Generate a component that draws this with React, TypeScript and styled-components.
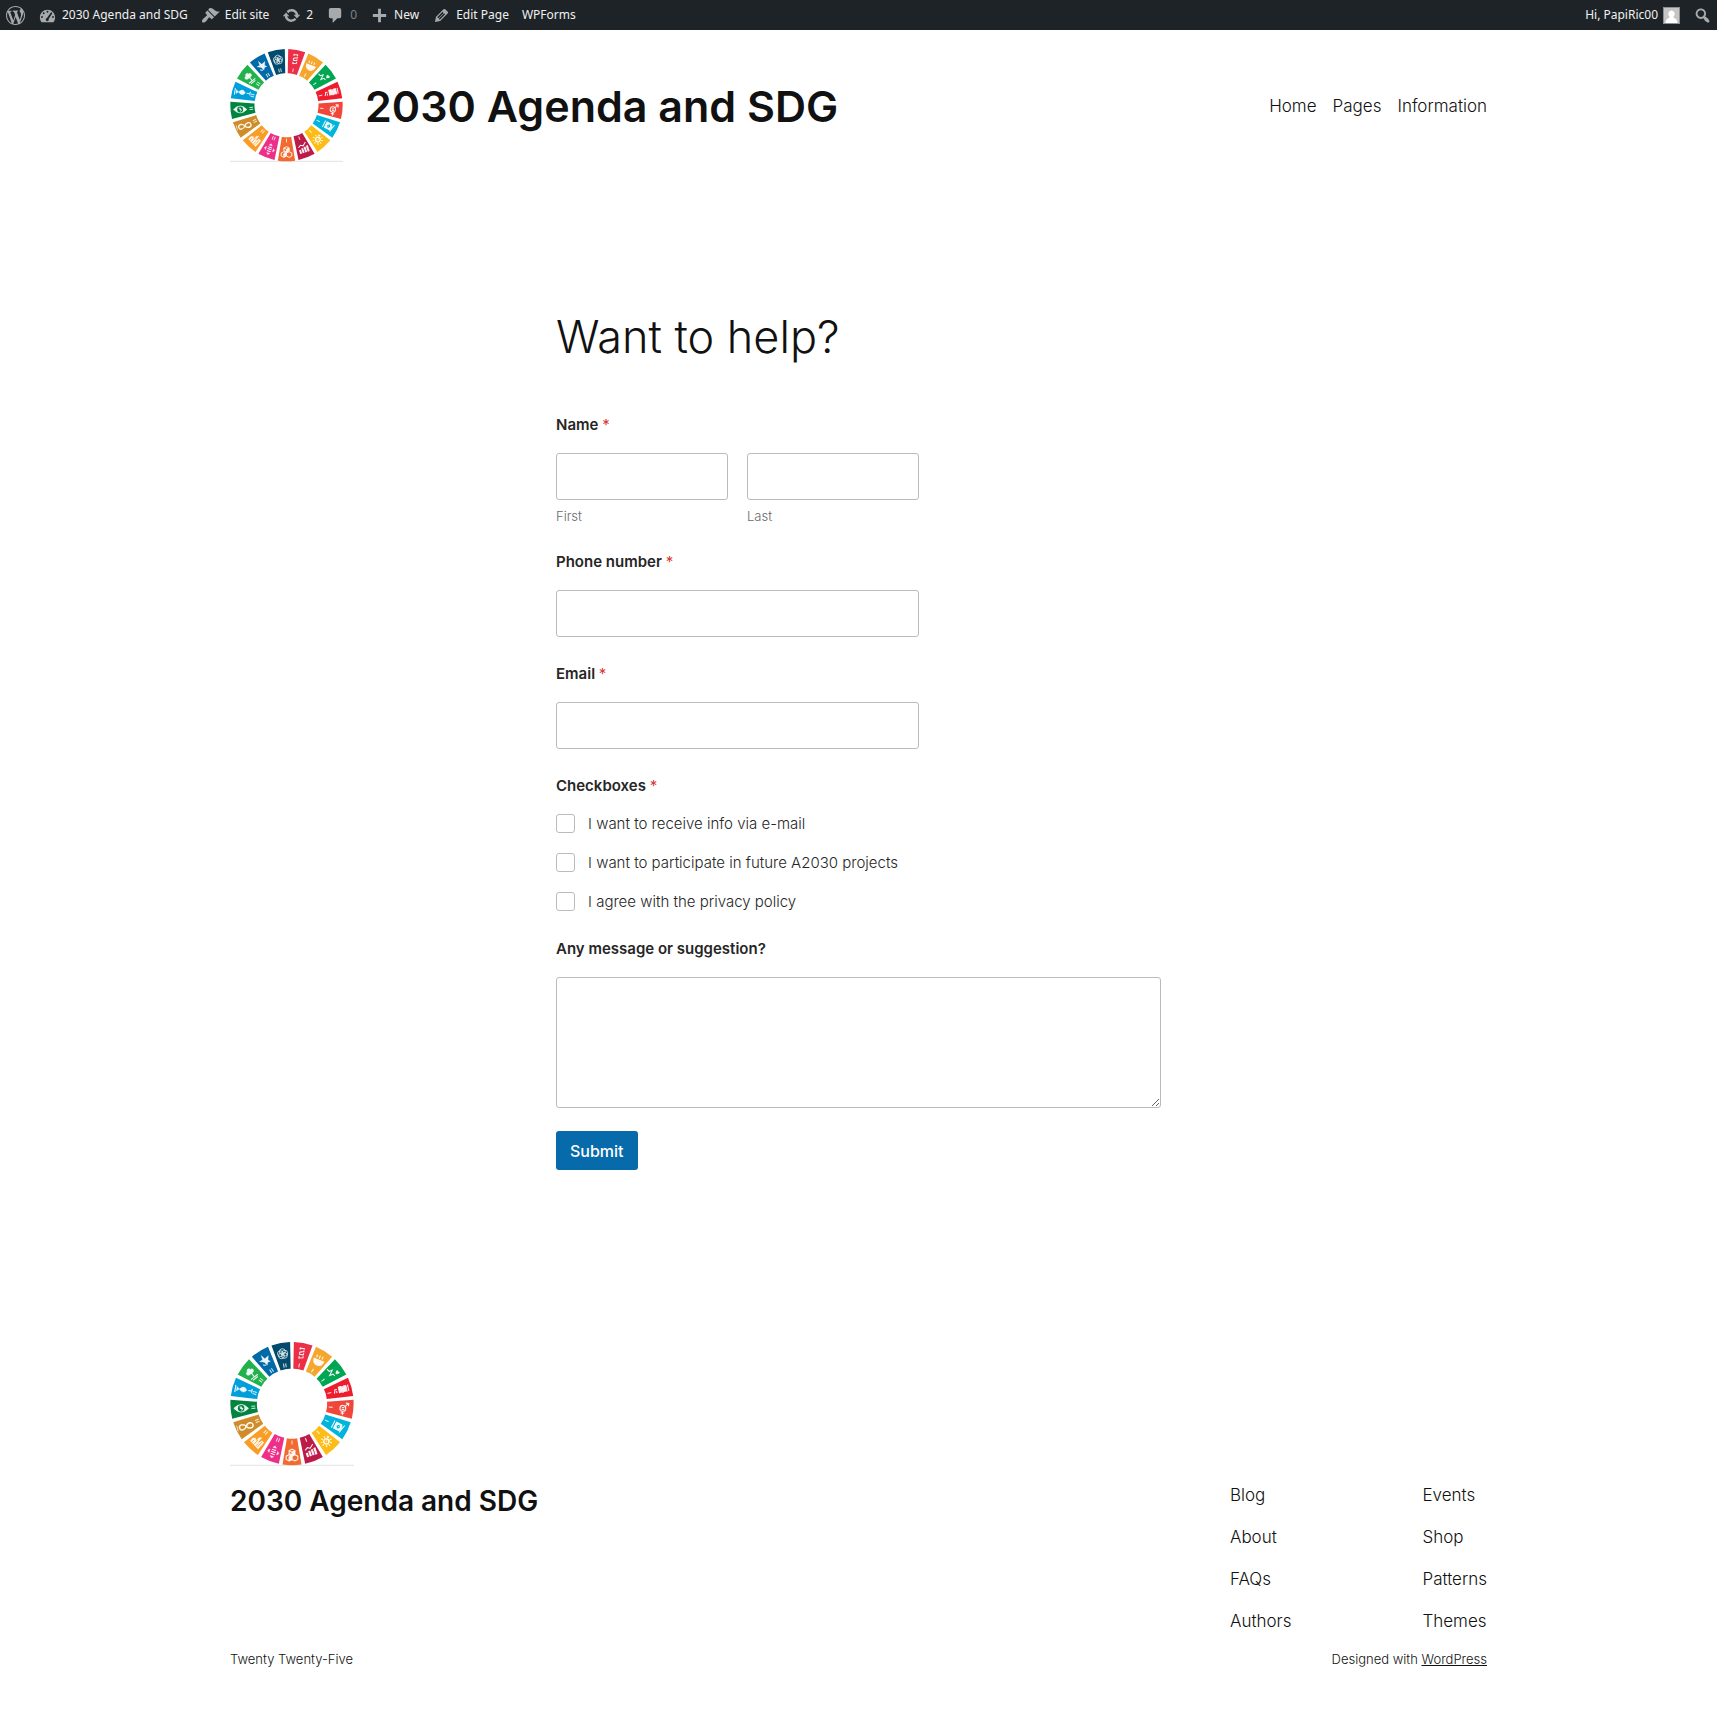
import React from "react";
import styled, { createGlobalStyle } from "styled-components";

const GlobalStyle = createGlobalStyle`
  *, *::before, *::after { box-sizing: border-box; }
  body {
    margin: 0;
    background: #fff;
    color: #111;
    font-family: Inter, "Liberation Sans", sans-serif;
    font-weight: 300;
  }
  a { color: inherit; text-decoration: none; }
  ul { list-style: none; margin: 0; padding: 0; }
`;

/* ---------- Admin bar ---------- */

const AdminBar = styled.nav`
  display: flex;
  justify-content: space-between;
  height: 30px;
  padding: 1px 5px 0 6px;
  background: #1d2327;
  color: #f0f0f1;
  font: 400 12px/28px "Noto Sans", "Open Sans", sans-serif;
`;

const BarGroup = styled.ul`
  display: flex;
  gap: 13px;
`;

const BarLink = styled.a<{ $muted?: boolean }>`
  display: flex;
  align-items: center;
  gap: 5px;
  height: 28px;
  color: ${(p) => (p.$muted ? "#7d8287" : "#f0f0f1")};
  white-space: nowrap;
`;

const BarButton = styled.button`
  display: flex;
  align-items: center;
  height: 28px;
  padding: 0;
  border: 0;
  background: none;
`;

const BarIcon = styled.svg`
  display: block;
  width: 19px;
  height: 19px;
  fill: #a7aaad;
`;

const Avatar = styled.svg`
  display: block;
  width: 17px;
  height: 17px;
  border: 1px solid #8c8f94;
  background: #c5c5c5;
`;

const icons = {
  wordpress:
    "M20 10c0-5.51-4.49-10-10-10C4.48 0 0 4.49 0 10c0 5.52 4.48 10 10 10 5.51 0 10-4.48 10-10zM7.78 15.37L4.37 6.22c.55-.02 1.17-.08 1.17-.08.5-.06.44-1.13-.06-1.11 0 0-1.45.11-2.37.11-.18 0-.37 0-.58-.01C4.12 2.69 6.87 1.11 10 1.11c2.33 0 4.45.87 6.05 2.34-.68-.11-1.65.39-1.65 1.58 0 .74.45 1.36.9 2.1.35.61.55 1.36.55 2.46 0 1.49-1.4 5-1.4 5l-3.03-8.37c.54-.02.82-.17.82-.17.5-.05.44-1.25-.06-1.22 0 0-1.44.12-2.38.12-.87 0-2.33-.12-2.33-.12-.5-.03-.56 1.2-.06 1.22l.92.08 1.26 3.41zM17.41 10c.24-.64.74-1.87.43-4.25.7 1.29 1.05 2.71 1.05 4.25 0 3.29-1.73 6.24-4.4 7.78.97-2.59 1.94-5.2 2.92-7.78zM6.1 18.09C3.12 16.65 1.11 13.53 1.11 10c0-1.3.23-2.48.72-3.59C3.25 10.3 4.67 14.2 6.1 18.09zm4.03-6.63l2.58 6.98c-.86.29-1.76.45-2.71.45-.79 0-1.57-.11-2.29-.33.81-2.38 1.62-4.74 2.42-7.1z",
  dashboard:
    "M3.76 17h12.48c1.1-1.37 1.76-3.11 1.76-5 0-4.42-3.58-8-8-8s-8 3.58-8 8c0 1.89.66 3.63 1.76 5zM10 5a1 1 0 1 1 0 2a1 1 0 1 1 0-2zM6 6.6a1 1 0 1 1 0 2a1 1 0 1 1 0-2zM14 6.6a1 1 0 0 1 .6 1.8l-3.4 5.2a1.6 1.6 0 1 1-1.8-.9l4-5.7a1 1 0 0 1 .6-.4zM4.2 10.6a1 1 0 1 1 0 2a1 1 0 1 1 0-2zM15.8 10.6a1 1 0 1 1 0 2a1 1 0 1 1 0-2z",
  brush:
    "M14.48 11.06L7.41 3.99l1.5-1.5c.5-.56 2.3-.47 3.51.32 1.21.8 1.43 1.28 2.91 2.1 1.18.64 2.45 1.26 4.45.85zm-.71.71L6.7 4.7 4.93 6.47c-.39.39-.39 1.02 0 1.41l1.06 1.06c.39.39.39 1.03 0 1.42-.6.6-1.43 1.11-2.21 1.69-.35.26-.7.53-1.01.84C1.43 14.23.4 16.08 1.4 17.07c.99 1 2.84-.03 4.18-1.36.31-.31.58-.66.85-1.02.57-.78 1.08-1.61 1.69-2.21.39-.39 1.02-.39 1.41 0l1.06 1.06c.39.39 1.02.39 1.41 0z",
  update:
    "M10.2 3.28c3.53 0 6.43 2.61 6.92 6h2.08l-3.5 4-3.5-4h2.32c-.45-1.97-2.21-3.45-4.32-3.45-1.45 0-2.73.71-3.54 1.78L4.95 5.66C6.23 4.2 8.11 3.28 10.2 3.28zm-.4 13.44c-3.52 0-6.43-2.61-6.92-6H.8l3.5-4c1.17 1.33 2.33 2.67 3.5 4H5.48c.45 1.97 2.21 3.45 4.32 3.45 1.45 0 2.73-.71 3.54-1.78l1.71 1.95c-1.28 1.46-3.15 2.38-5.25 2.38z",
  comment:
    "M5 2h9c1.1 0 2 .9 2 2v7c0 1.1-.9 2-2 2h-2l-5 5v-5H5c-1.1 0-2-.9-2-2V4c0-1.1.9-2 2-2z",
  plus: "M17 8.5v3h-5.5V17h-3v-5.5H3v-3h5.5V3h3v5.5z",
  edit: "M13.89 3.39l2.71 2.72c.46.46.42 1.24.03 1.64l-8.01 8.02-5.56 1.16 1.16-5.58s7.6-7.63 7.99-8.03c.39-.39 1.22-.39 1.68.07zm-2.73 2.79l-5.59 5.61 1.11 1.11 5.54-5.65zm-2.97 8.23l5.58-5.6-1.07-1.08-5.59 5.6z",
  search:
    "M12.14 4.18c1.87 1.87 2.11 4.75.72 6.89.12.1.22.21.36.31.2.16.47.36.81.59.34.24.56.39.66.47.42.31.73.57.94.78.32.32.6.65.84 1 .25.35.44.69.59 1.04.14.35.21.68.18 1-.02.32-.14.59-.36.81s-.49.34-.81.36c-.31.02-.65-.04-.99-.19-.35-.14-.7-.34-1.04-.59-.35-.24-.68-.52-1-.84-.21-.21-.47-.52-.77-.93-.1-.13-.25-.35-.47-.66-.22-.32-.4-.57-.56-.78-.16-.2-.29-.35-.44-.5-2.07 1.09-4.69.76-6.44-.98-2.14-2.15-2.14-5.64 0-7.78 2.15-2.15 5.63-2.15 7.78 0zm-1.41 6.36c1.36-1.37 1.36-3.58 0-4.95-1.37-1.37-3.59-1.37-4.95 0-1.37 1.37-1.37 3.58 0 4.95 1.36 1.37 3.58 1.37 4.95 0z",
};

function Icon({ name }: { name: keyof typeof icons }) {
  return (
    <BarIcon viewBox="0 0 20 20" aria-hidden="true">
      <path fillRule="evenodd" d={icons[name]} />
    </BarIcon>
  );
}

/* ---------- Goals wheel ---------- */

const Wheel = styled.svg<{ $size: number }>`
  display: block;
  flex: none;
  width: ${(p) => p.$size}px;
  height: ${(p) => p.$size}px;
`;

const fig = { fill: "none", stroke: "#fff", strokeWidth: 3 };

type Goal = { color: string; turn: number; art: React.ReactNode };

const goals: Goal[] = [
  { color: "#eb2f46", turn: 98, art: <g {...fig}><path d="M-16-6h5m2 0h5m3 0h5m3 0h5M-14-6v11M-6-6l3 10M3-6v12M11-6l2 10M-16 5h6M-4 5h6M8 5h7" /></g> },
  { color: "#f4a72c", turn: 22, art: <g {...fig}><path fill="#fff" d="M-14 0h28q-2 14-14 14T-14 0z" /><path d="M-8-5q-3-4 0-8M0-5q-3-4 0-8M8-5q-3-4 0-8" /></g> },
  { color: "#00a651", turn: 45, art: <g {...fig}><path d="M-18 4h8l4-8 5 15 4-9h7" /><path fill="#fff" d="M8-4q-8-8-3-10 3 0 3 3 0-3 4-3 4 2-4 10z" strokeWidth="1" /></g> },
  { color: "#ee1c2e", turn: -12, art: <g {...fig}><path fill="#fff" d="M-6-8q7-2 10 2 4-4 11-2v15q-7-2-11 1-3-3-10-1z" /><path d="M20-10v18M-20 7l4-12M-16-3h5M-13 7v-6" /></g> },
  { color: "#f1473a", turn: 5, art: <g {...fig}><circle cx="0" cy="0" r="8" /><path d="M0 8v11M-5 13h10M6-6l8-8M7-15h8v8M-3-2h7M-3 3h7" /></g> },
  { color: "#00b4dc", turn: 27, art: <g {...fig}><path d="M-14-11v22M16-11L11 13" /><path fill="#fff" d="M-8-9H8l4 9-4 9H-8z" /><path stroke="#00b4dc" d="M-2 0l4-4 3 4-3 4z" /></g> },
  { color: "#fdbc16", turn: 20, art: <g {...fig}><circle r="7" strokeWidth="4" /><path strokeDasharray="3 5.5" d="M0-13a13 13 0 1 1-.1 0" strokeWidth="5" /><path d="M0-3v5" strokeWidth="2" /></g> },
  { color: "#bc1b48", turn: -18, art: <g {...fig}><path d="M-11 13V1M-3 13V-2M5 13V-4M13 13V-6" strokeWidth="6" /><path d="M-13-7l8-5 7 4 10-9" /></g> },
  { color: "#f26a2e", turn: 0, art: <g {...fig}><path d="M0-15l8 4v8l-8 4-8-4v-8zM-8 0l8 4v9l-8 4-8-4V4zM8 0l8 4v9l-8 4-8-4V4zM-8-11L0-7l8-4" /><path fill="#fff" d="M-8 6l7-3v9l-7 4zM0-6l7-4v7l-7 4z" /></g> },
  { color: "#ee2f89", turn: 18, art: <g {...fig}><path d="M-6-4H6M-6 2H6M-6 8H6" /><path fill="#fff" d="M0-15l5 5H-5zM0 19l5-5H-5zM-16 2l5-5V7zM16 2l-5-5V7z" strokeWidth="1" /></g> },
  { color: "#f99d26", turn: 42, art: <g {...fig}><path fill="#fff" d="M-16 12V2l6-5 6 5v-12l6-5v17l5-6v-5h8v24z" strokeWidth="1" /><path stroke="#f99d26" strokeWidth="2" d="M-10 12V3M-2 12V-4M5 12v-9M10 12V-6" /></g> },
  { color: "#cf8d2a", turn: -14, art: <g {...fig}><path d="M0 0c-6-10-19-9-19 0s13 10 19 0 19-9 19 0-13 10-19 0z" strokeWidth="4" /><path d="M-25-8v16" strokeWidth="2" /></g> },
  { color: "#00843f", turn: 0, art: <g {...fig}><path fill="#fff" d="M-20 0q20-21 40 0-20 21-40 0z" strokeWidth="2" /><circle r="9" fill="#00843f" stroke="none" /><path d="M-4-4l5 1-2 3 5 1-3 5" /></g> },
  { color: "#009fdc", turn: 9, art: <g {...fig}><path fill="#fff" d="M-10 0Q2-15 11 0 2 13-10 0l-7 6v-12z" strokeWidth="1" /><path d="M-21-10v20M15 0h8M25-6v11" /></g> },
  { color: "#21b24b", turn: -38, art: <g {...fig}><path fill="#fff" d="M-3 2q-11 0-10-7 1-4 6-4 1-6 7-5 4 1 4 5 6 0 6 5 0 6-8 6z" strokeWidth="1" /><path d="M0 0v14M-12 14h24M-9 19H8" /></g> },
  { color: "#0069a7", turn: 32, art: <g {...fig}><path fill="#fff" d="M-16-5l13 2 4-12 5 10 8 0-5 5 3 8-11-2-12 5 5-8z" strokeWidth="1" /><path d="M10 10l-8 4" /></g> },
  { color: "#004a6b", turn: -8, art: <g {...fig} strokeWidth="2"><circle cx="0" cy="-5" r="8" /><circle cx="-6" cy="0" r="8" /><circle cx="6" cy="0" r="8" /><circle cx="-4" cy="6" r="8" /><circle cx="4" cy="6" r="8" /></g> },
];

const STEP = 360 / goals.length;

function GoalsWheel({ size }: { size: number }) {
  return (
    <Wheel $size={size} viewBox="0 0 340 340" role="img" aria-label="Sustainable goals wheel">
      <path d="M0 338h340" stroke="#e2e2e2" strokeWidth="3" />
      {goals.map((goal, i) => {
        const angle = (i + 0.5) * STEP;
        return (
          <g key={goal.color} transform={`translate(170 169) rotate(${angle})`}>
            <path d="M-26-167Q0-171 26-167L14-95Q0-98-14-95z" fill={goal.color} />
            <path
              d={i < 9 ? "M0-112v11" : "M-3-112v11M3-112v11"}
              stroke="#fff"
              strokeWidth="3"
              opacity="0.8"
            />
            <g transform={`translate(0 -140) rotate(${goal.turn - angle})`} opacity="0.93">
              {goal.art}
            </g>
          </g>
        );
      })}
    </Wheel>
  );
}

/* ---------- Page shell ---------- */

const Wide = styled.div`
  width: 100%;
  max-width: 1257px;
  margin: 0 auto;
`;

const Header = styled.header`
  padding: 19px 0 18px;
`;

const HeaderRow = styled(Wide)`
  display: flex;
  align-items: center;
  justify-content: space-between;
`;

const Brand = styled.div`
  display: flex;
  align-items: center;
  gap: 22px;
`;

const SiteTitle = styled.p<{ $size: number }>`
  margin: 0;
  font-size: ${(p) => p.$size}px;
  line-height: 36px;
  font-weight: 600;
  white-space: nowrap;
`;

const MainNav = styled.nav`
  display: flex;
  gap: 16px;
  font-size: 17px;
  line-height: 24px;
`;

const Main = styled.main`
  width: 100%;
  max-width: 605px;
  margin: 0 auto;
  padding: 131px 0 172px;
`;

const PageTitle = styled.h1`
  margin: 0 0 52px;
  font-size: 45px;
  line-height: 52px;
  font-weight: 300;
`;

/* ---------- Form ---------- */

const Form = styled.form`
  display: flex;
  flex-direction: column;
  gap: 27px;
`;

const Field = styled.div`
  display: flex;
  flex-direction: column;
  gap: 18px;
  max-width: 363px;
`;

const FieldSet = styled.fieldset`
  min-width: 0;
  margin: 0;
  padding: 0;
  border: 0;
`;

const labelText = `
  display: block;
  padding: 0;
  color: #262626;
  font-size: 15px;
  line-height: 20px;
  font-weight: 600;
`;

const Label = styled.label`${labelText}`;
const Legend = styled.legend`
  ${labelText}
  margin-bottom: 18px;
`;

const Required = styled.span`
  color: #d63637;
  font-weight: 400;
`;

const NameRow = styled.div`
  display: grid;
  grid-template-columns: 1fr 1fr;
  gap: 19px;
  max-width: 363px;
`;

const NamePart = styled.div`
  display: flex;
  flex-direction: column;
  gap: 8px;
`;

const SubLabel = styled.label`
  color: #6a6a6a;
  font-size: 13px;
  line-height: 17px;
`;

const TextInput = styled.input`
  width: 100%;
  height: 47px;
  padding: 0 13px;
  border: 1px solid #bbb;
  border-radius: 3px;
  background: #fff;
  font: inherit;
`;

const MessageField = styled(Field)`
  max-width: none;
`;

const TextArea = styled.textarea`
  display: block;
  width: 100%;
  height: 131px;
  padding: 13px;
  border: 1px solid #bbb;
  border-radius: 3px;
  font: inherit;
  resize: vertical;
`;

const Choices = styled.div`
  display: flex;
  flex-direction: column;
  gap: 19px;
`;

const Choice = styled.label`
  display: flex;
  align-items: flex-start;
  gap: 13px;
  color: #262626;
  font-size: 15px;
  line-height: 20px;
`;

const Checkbox = styled.input`
  appearance: none;
  width: 19px;
  height: 19px;
  margin: 0;
  border: 1px solid #bbb;
  border-radius: 3px;
  background: #fff;
  &:checked { background: #066aab; }
`;

const Submit = styled.button`
  display: block;
  height: 39px;
  margin-top: 23px;
  padding: 0 14px;
  border: 0;
  border-radius: 3px;
  background: #066aab;
  color: #fff;
  font-family: inherit;
  font-size: 16px;
  font-weight: 500;
`;

/* ---------- Footer ---------- */

const Footer = styled.footer`
  padding-bottom: 45px;
`;

const FooterRow = styled.div`
  display: flex;
  justify-content: space-between;
  margin-top: 17px;
`;

const FooterLinks = styled.nav`
  display: flex;
  gap: 131px;
`;

const LinkColumn = styled.ul`
  display: flex;
  flex-direction: column;
  gap: 18px;
  font-size: 17px;
  line-height: 24px;
`;

const Credits = styled.div`
  display: flex;
  justify-content: space-between;
  margin-top: 16px;
  font-size: 13px;
  line-height: 20px;
`;

const CreditLink = styled.a`
  text-decoration: underline;
`;

const linkColumns = [
  ["Blog", "About", "FAQs", "Authors"],
  ["Events", "Shop", "Patterns", "Themes"],
];

const choices = [
  "I want to receive info via e-mail",
  "I want to participate in future A2030 projects",
  "I agree with the privacy policy",
];

const Star = () => <Required>*</Required>;

export default function App() {
  return (
    <>
      <GlobalStyle />
      <AdminBar aria-label="Toolbar">
        <BarGroup>
          <li><BarLink href="#" aria-label="About WordPress"><Icon name="wordpress" /></BarLink></li>
          <li><BarLink href="#"><Icon name="dashboard" />2030 Agenda and SDG</BarLink></li>
          <li><BarLink href="#"><Icon name="brush" />Edit site</BarLink></li>
          <li><BarLink href="#"><Icon name="update" />2</BarLink></li>
          <li><BarLink href="#" $muted><Icon name="comment" />0</BarLink></li>
          <li><BarLink href="#"><Icon name="plus" />New</BarLink></li>
          <li><BarLink href="#"><Icon name="edit" />Edit Page</BarLink></li>
          <li><BarLink href="#">WPForms</BarLink></li>
        </BarGroup>
        <BarGroup>
          <li>
            <BarLink href="#">
              Hi, PapiRic00
              <Avatar viewBox="0 0 15 15" aria-hidden="true">
                <path fill="#fff" d="M7.5 2.5a3.3 3.6 0 0 1 1.8 6.6c.3 1.2 4 1.3 4.2 5.9h-12c.2-4.6 3.900-4.700 4.200-5.900a3.300 3.600 0 0 1 1.800-6.600z" />
              </Avatar>
            </BarLink>
          </li>
          <li><BarButton type="button" aria-label="Search"><Icon name="search" /></BarButton></li>
        </BarGroup>
      </AdminBar>

      <Header>
        <HeaderRow>
          <Brand>
            <GoalsWheel size={113} />
            <SiteTitle $size={43}><a href="#">2030 Agenda and SDG</a></SiteTitle>
          </Brand>
          <MainNav aria-label="Main">
            <a href="#">Home</a>
            <a href="#">Pages</a>
            <a href="#">Information</a>
          </MainNav>
        </HeaderRow>
      </Header>

      <Main>
        <PageTitle>Want to help?</PageTitle>
        <Form onSubmit={(e) => e.preventDefault()}>
          <FieldSet>
            <Legend>Name <Star /></Legend>
            <NameRow>
              <NamePart>
                <TextInput id="first" type="text" />
                <SubLabel htmlFor="first">First</SubLabel>
              </NamePart>
              <NamePart>
                <TextInput id="last" type="text" />
                <SubLabel htmlFor="last">Last</SubLabel>
              </NamePart>
            </NameRow>
          </FieldSet>
          <Field>
            <Label htmlFor="phone">Phone number <Star /></Label>
            <TextInput id="phone" type="tel" />
          </Field>
          <Field>
            <Label htmlFor="email">Email <Star /></Label>
            <TextInput id="email" type="email" />
          </Field>
          <FieldSet>
            <Legend>Checkboxes <Star /></Legend>
            <Choices>
              {choices.map((text) => (
                <Choice key={text}>
                  <Checkbox type="checkbox" />
                  {text}
                </Choice>
              ))}
            </Choices>
          </FieldSet>
          <div>
            <MessageField>
              <Label htmlFor="message">Any message or suggestion?</Label>
              <TextArea id="message" />
            </MessageField>
            <Submit type="submit">Submit</Submit>
          </div>
        </Form>
      </Main>

      <Footer>
        <Wide>
          <GoalsWheel size={124} />
          <FooterRow>
            <SiteTitle $size={28}><a href="#">2030 Agenda and SDG</a></SiteTitle>
            <FooterLinks aria-label="Footer">
              {linkColumns.map((column) => (
                <LinkColumn key={column[0]}>
                  {column.map((text) => (
                    <li key={text}><a href="#">{text}</a></li>
                  ))}
                </LinkColumn>
              ))}
            </FooterLinks>
          </FooterRow>
          <Credits>
            <span>Twenty Twenty-Five</span>
            <span>Designed with <CreditLink href="#">WordPress</CreditLink></span>
          </Credits>
        </Wide>
      </Footer>
    </>
  );
}
